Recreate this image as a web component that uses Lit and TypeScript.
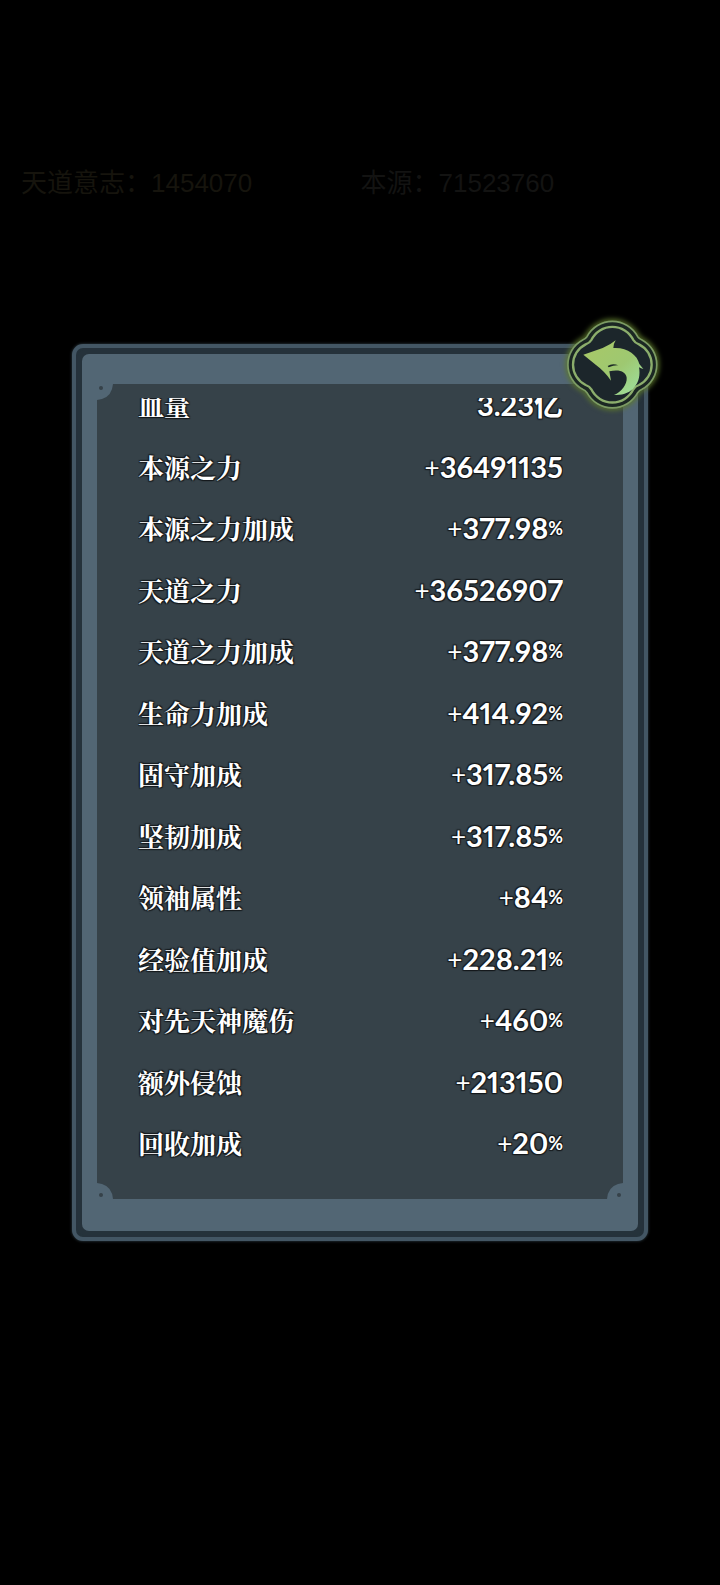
import { LitElement, html, css } from "lit";
import { customElement } from "lit/decorators.js";

const stats: [string, string, string, string][] = [
  ["血量", "", "3.23亿", ""],
  ["本源之力", "+", "36491135", ""],
  ["本源之力加成", "+", "377.98", "%"],
  ["天道之力", "+", "36526907", ""],
  ["天道之力加成", "+", "377.98", "%"],
  ["生命力加成", "+", "414.92", "%"],
  ["固守加成", "+", "317.85", "%"],
  ["坚韧加成", "+", "317.85", "%"],
  ["领袖属性", "+", "84", "%"],
  ["经验值加成", "+", "228.21", "%"],
  ["对先天神魔伤", "+", "460", "%"],
  ["额外侵蚀", "+", "213150", ""],
  ["回收加成", "+", "20", "%"],
];

@customElement("app-root")
export class AppRoot extends LitElement {
  static styles = css`
    :host {
      display: block;
      min-height: 100vh;
      background: #000;
      box-sizing: border-box;
      padding-top: 164px;
      font-family: "Liberation Sans", "Noto Sans CJK SC", sans-serif;
    }
    .totals {
      display: grid;
      grid-template-columns: 17fr 18fr;
      padding-left: 21px;
      font-size: 26px;
      line-height: 38px;
    }
    .will { color: #16140d; }
    .source { color: #131312; }
    .panel {
      position: relative;
      box-sizing: border-box;
      margin: 142px 10% 0;
      border: 4px solid #435664;
      border-radius: 11px;
      padding: 6px;
      background: #25323b;
      box-shadow: inset 0 0 2px #26343e, 0 0 3px #35454f;
    }
    .frame {
      background: #526674;
      border-radius: 7px;
      padding: 30px 15px 32px;
    }
    .body {
      background: #364249;
      position: relative;
      padding: 14px 60px 35px 41px;
    }
    .corner {
      position: absolute;
      width: 16px;
      height: 16px;
    }
    .tl { top: 0; left: 0; }
    .bl { bottom: 0; left: 0; transform: scaleY(-1); }
    .br { bottom: 0; right: 0; transform: scale(-1); }
    .scroller {
      display: flex;
      flex-direction: column;
      justify-content: flex-end;
      height: 766px;
      overflow: hidden;
    }
    .list {
      display: flex;
      flex: none;
      flex-direction: column;
      justify-content: space-between;
      height: 780px;
      margin: 0;
    }
    .row {
      display: flex;
      justify-content: space-between;
      align-items: center;
      height: 42px;
      line-height: 42px;
      color: #fff;
      text-shadow: 1px 1px 1px #15191c, -1px -1px 1px #15191c, 1px -1px 1px #15191c, -1px 1px 1px #15191c;
    }
    dt {
      font-family: "Noto Serif CJK SC", "Noto Sans CJK SC", sans-serif;
      font-size: 26px;
      font-weight: 700;
    }
    dd {
      display: flex;
      align-items: center;
      margin: 0;
      font-family: Lato, "Noto Sans CJK SC", sans-serif;
      font-size: 29px;
      font-weight: 700;
      font-variant-numeric: proportional-nums;
    }
    .sign { font-size: 26px; font-weight: 400; }
    .unit { font-size: 18px; }
    .back {
      position: absolute;
      right: -16px;
      top: -33px;
      width: 100px;
      height: 100px;
      padding: 0;
      border: 0;
      background: none;
      cursor: pointer;
    }
    .back svg {
      display: block;
      width: 100%;
      height: 100%;
      overflow: visible;
    }
    .halo { filter: blur(8px); }
  `;

  private corner(place: string) {
    return html`<svg class="corner ${place}" viewBox="0 0 16 16" aria-hidden="true">
      <path d="M0 0H16Q15 12 5 15L0 16Z" fill="#526674" />
      <circle cx="4" cy="4" r="2" fill="#364249" />
    </svg>`;
  }

  render() {
    const rim =
      "M81 65A86 86 0 0 1 233 65Q238 72 246 75A84 84 0 0 1 246 223Q238 226 233 233A86 86 0 0 1 81 233Q76 226 68 223A84 84 0 0 1 68 75Q76 72 81 65Z";
    const ring =
      "M94 75A70 70 0 0 1 220 75Q225 84 237 88A68 68 0 0 1 237 210Q225 214 220 223A70 70 0 0 1 94 223Q89 214 77 210A68 68 0 0 1 77 88Q89 84 94 75Z";
    return html`
      <div class="totals">
        <span class="will">天道意志：1454070</span><span class="source">本源：71523760</span>
      </div>
      <main class="panel">
        <div class="frame">
          <div class="body">
            ${this.corner("tl")}${this.corner("bl")}${this.corner("br")}
            <div class="scroller">
              <dl class="list">
                ${stats.map(
                  ([name, sign, value, unit]) => html`<div class="row">
                    <dt>${name}</dt>
                    <dd><span class="sign">${sign}</span><span>${value}</span><span class="unit">${unit}</span></dd>
                  </div>`
                )}
              </dl>
            </div>
          </div>
        </div>
        <button class="back" aria-label="返回">
          <svg viewBox="0 0 300 300" aria-hidden="true">
            <defs>
              <linearGradient id="leaf" x1="0" y1="0" x2="1" y2="1">
                <stop offset="0" stop-color="#a9c866" />
                <stop offset="0.55" stop-color="#9ec871" />
                <stop offset="1" stop-color="#9fe3a4" />
              </linearGradient>
            </defs>
            <path class="halo" d=${rim} fill="none" stroke="#5c772b" stroke-width="14" />
            <path d=${rim} fill="#1b2723" stroke="#7c9b64" stroke-width="5" />
            <path d=${ring} fill="#1c262b" stroke="#8cae6c" stroke-width="7" stroke-linejoin="round" />
            <path
              d="M70 119L128 99Q152 89 167 76Q160 87 160 99C200 96 232 119 238 147L250 162Q243 161 237 157C246 205 214 244 162 240C184 230 202 208 200 188C198 170 178 162 148 169L153 197Q134 169 108 150Z"
              fill="url(#leaf)"
            />
            <path d="M143 153Q157 144 175 151Q162 150 146 157Z" fill="#1c2a26" />
          </svg>
        </button>
      </main>
    `;
  }
}
